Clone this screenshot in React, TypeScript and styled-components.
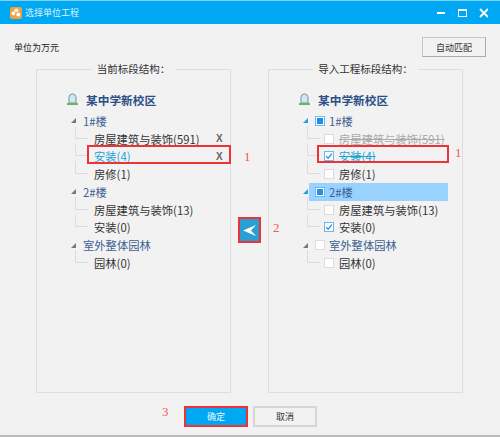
import styled, { createGlobalStyle } from "styled-components";

const GlobalStyle = createGlobalStyle`
  html, body {
    margin: 0;
    padding: 0;
    background: #f2f2f2;
  }
  * {
    box-sizing: border-box;
  }
`;

type Leaf = {
  label: string;
  checked?: boolean;
  active?: boolean;
  removed?: boolean;
  removable?: boolean;
};

type Group = {
  label: string;
  state?: "partial" | "empty";
  selected?: boolean;
  open?: boolean;
  leaves: Leaf[];
};

const leftTree: Group[] = [
  {
    label: "1#楼",
    leaves: [
      { label: "房屋建筑与装饰(591)", removable: true },
      { label: "安装(4)", removable: true, active: true },
      { label: "房修(1)" },
    ],
  },
  {
    label: "2#楼",
    leaves: [{ label: "房屋建筑与装饰(13)" }, { label: "安装(0)" }],
  },
  { label: "室外整体园林", leaves: [{ label: "园林(0)" }] },
];

const rightTree: Group[] = [
  {
    label: "1#楼",
    state: "partial",
    open: true,
    leaves: [
      { label: "房屋建筑与装饰(591)", removed: true },
      { label: "安装(4)", checked: true, active: true, removed: true },
      { label: "房修(1)" },
    ],
  },
  {
    label: "2#楼",
    state: "partial",
    selected: true,
    open: true,
    leaves: [{ label: "房屋建筑与装饰(13)" }, { label: "安装(0)", checked: true }],
  },
  { label: "室外整体园林", state: "empty", leaves: [{ label: "园林(0)" }] },
];

const SchoolIcon = () => (
  <svg width="13" height="13" viewBox="0 0 13 13">
    <path d="M3 10V4.5C3 2.5 4.5 1 6.5 1S10 2.5 10 4.5V10Z" fill="#d3e7f3" stroke="#6d94ab" />
    <rect x="1" y="10" width="11" height="2" fill="#6fb35c" />
  </svg>
);

const AppLogo = () => (
  <svg width="12" height="12" viewBox="0 0 16 16">
    <rect width="16" height="16" rx="3" fill="#f5a03c" />
    <circle cx="8.5" cy="4.5" r="2.6" fill="#fff" />
    <circle cx="4.5" cy="8.5" r="2.6" fill="#fff" />
    <circle cx="11" cy="10" r="2.6" fill="#fff" />
    <circle cx="8" cy="8" r="1.4" fill="#f5a03c" />
  </svg>
);

const Tree = ({ groups, checkable, root }: { groups: Group[]; checkable?: boolean; root: string }) => (
  <TreeBody $checkable={checkable}>
    <RootRow>
      <SchoolIcon />
      <RootLabel>{root}</RootLabel>
    </RootRow>
    {groups.map((group) => (
      <div key={group.label}>
        <GroupRow>
          <Arrow $open={group.open} />
          <GroupBody $selected={group.selected}>
            {checkable && (
              <Check $selected={group.state === "partial"}>{group.state === "partial" && <Dot />}</Check>
            )}
            <GroupLabel>{group.label}</GroupLabel>
          </GroupBody>
        </GroupRow>
        <div>
          {group.leaves.map((leaf) => (
            <LeafRow key={leaf.label}>
              {checkable && (
                <LeafCheck $selected={leaf.checked}>
                  {leaf.checked && (
                    <svg width="8" height="8" viewBox="0 0 9 9">
                      <path d="M1.2 4.6 3.5 7 7.8 1.8" fill="none" stroke="#2f8fe0" strokeWidth="1.5" />
                    </svg>
                  )}
                </LeafCheck>
              )}
              <LeafLabel $active={leaf.active} $removed={leaf.removed}>
                {leaf.label}
              </LeafLabel>
              {leaf.removable && <RemoveMark>X</RemoveMark>}
            </LeafRow>
          ))}
        </div>
      </div>
    ))}
  </TreeBody>
);

export default function App() {
  return (
    <Window>
      <GlobalStyle />
      <TitleBar>
        <AppLogo />
        <Title>选择单位工程</Title>
        <WindowControls>
          <svg width="51" height="12" viewBox="0 0 51 12">
            <rect x="0" y="5" width="8" height="2" fill="#fff" />
            <rect x="21.5" y="2.5" width="8" height="7" fill="none" stroke="#fff" />
            <rect x="21" y="2" width="9" height="2" fill="#fff" />
            <path d="M43 2 51 10M51 2 43 10" stroke="#fff" strokeWidth="1.8" />
          </svg>
        </WindowControls>
      </TitleBar>
      <Content>
        <TopRow>
          <Unit>单位为万元</Unit>
          <MatchButton>自动匹配</MatchButton>
        </TopRow>
        <Panels>
          <Panel>
            <PanelTitle>当前标段结构：</PanelTitle>
            <Tree groups={leftTree} root="某中学新校区" />
          </Panel>
          <Middle>
            <MoveButton>
              <svg width="13" height="11" viewBox="0 0 13 11">
                <path d="M0 5.5 13 0 8 5.5 13 11Z" fill="#fff" />
              </svg>
            </MoveButton>
          </Middle>
          <Panel>
            <PanelTitle>导入工程标段结构：</PanelTitle>
            <Tree groups={rightTree} root="某中学新校区" checkable />
          </Panel>
        </Panels>
        <Footer>
          <OkButton>确定</OkButton>
          <CancelButton>取消</CancelButton>
        </Footer>
      </Content>
      <Marker $x={87} $y={145} $w={144} $h={19} />
      <Marker $x={317} $y={145} $w={132} $h={18} />
      <Step $x={244} $y={149}>1</Step>
      <Step $x={455} $y={145}>1</Step>
      <Step $x={273} $y={220}>2</Step>
      <Step $x={162} $y={404}>3</Step>
    </Window>
  );
}

const Window = styled.div`
  position: relative;
  width: 500px;
  height: 437px;
  background: #f2f2f2;
  border-bottom: 2px solid #b9b9b9;
  font-family: "Noto Sans CJK SC", "Liberation Sans", sans-serif;
  font-size: 11.3px;
  color: #333;
  overflow: hidden;
`;

const TitleBar = styled.div`
  display: flex;
  align-items: center;
  height: 24px;
  padding: 0 12px 0 10px;
  background: #00a8f3;
  border-top: 1px solid #7fd0f5;
  color: #dff4fe;
`;

const Title = styled.span`
  margin-left: 3px;
  font-size: 9px;
`;

const WindowControls = styled.div`
  display: flex;
  margin-left: auto;
`;

const Content = styled.div`
  padding: 13px 14px 0 14px;
`;

const TopRow = styled.div`
  display: flex;
  align-items: center;
  justify-content: space-between;
  height: 20px;
`;

const Unit = styled.span`
  font-size: 9px;
  color: #222;
`;

const MatchButton = styled.div`
  display: flex;
  align-items: center;
  justify-content: center;
  width: 64px;
  height: 20px;
  border: 1px solid #c6c6c6;
  border-right-color: #aaa;
  border-bottom-color: #aaa;
  font-size: 9px;
`;

const Panels = styled.div`
  display: flex;
  height: 336px;
  margin: 5px 23px 0 22px;
`;

const Panel = styled.fieldset`
  flex: 0 0 195px;
  min-width: 0;
  height: 331px;
  margin: 0;
  padding: 0;
  border: 1px solid #dedede;
`;

const PanelTitle = styled.legend`
  padding: 0 5px;
  margin: 0 auto;
  font-size: 10.5px;
  line-height: 14px;
  color: #333;
`;

const Middle = styled.div`
  flex: 1;
  display: flex;
  justify-content: center;
  align-items: center;
`;

const MoveButton = styled.div`
  display: flex;
  align-items: center;
  justify-content: center;
  width: 23px;
  height: 26px;
  border: 2px solid #ee3338;
  background: #2a9fd2;
`;

const Footer = styled.div`
  display: flex;
  justify-content: center;
  gap: 5px;
  margin-top: 8px;
  padding-left: 1px;
`;

const OkButton = styled.div`
  display: flex;
  align-items: center;
  justify-content: center;
  width: 64px;
  height: 21px;
  border: 2px solid #ee3338;
  background: #00a8f3;
  color: #e8f7ff;
  font-size: 9px;
`;

const CancelButton = styled.div`
  display: flex;
  align-items: center;
  justify-content: center;
  width: 64px;
  height: 21px;
  border: 2px solid #d6d6d6;
  font-size: 9px;
`;

const TreeBody = styled.div<{ $checkable?: boolean }>`
  display: flex;
  flex-direction: column;
  padding: ${(p) => (p.$checkable ? "14px 14px 0 29px" : "14px 0 0 29px")};
  --leaf-indent: ${(p) => (p.$checkable ? "17px" : "19px")};
`;

const RootRow = styled.div`
  display: flex;
  align-items: center;
  gap: 7px;
  height: 18px;
  margin-bottom: 4px;
`;

const RootLabel = styled.span`
  font-weight: 700;
  font-size: 11.7px;
  color: #2b4f86;
`;

const GroupRow = styled.div`
  display: flex;
  align-items: center;
  height: 17.75px;
  margin-left: 5px;
`;

const GroupBody = styled.div<{ $selected?: boolean }>`
  flex: 1;
  display: flex;
  align-items: center;
  height: 100%;
  margin-left: 1px;
  padding-left: 6px;
  background: ${(p) => (p.$selected ? "#99d1ff" : "transparent")};
`;

const Arrow = styled.span<{ $open?: boolean }>`
  width: 0;
  height: 0;
  border-style: solid;
  border-width: 0 0 5px 5px;
  border-color: transparent transparent ${(p) => (p.$open ? "#1e9fe0" : "#777")} transparent;
`;

const GroupLabel = styled.span`
  color: #3c5f92;
`;

const LeafRow = styled.div`
  position: relative;
  display: flex;
  align-items: center;
  height: 17.75px;
  margin-left: 9px;
  padding-left: var(--leaf-indent);
  &::before {
    content: "";
    position: absolute;
    left: 0;
    top: -4px;
    bottom: 50%;
    width: 12px;
    border-left: 1px solid #dcdcdc;
    border-bottom: 1px solid #dcdcdc;
  }
`;

const LeafLabel = styled.span<{ $active?: boolean; $removed?: boolean }>`
  color: ${(p) => (p.$active ? "#18a3d6" : p.$removed ? "#aaa" : "#333")};
  text-decoration: ${(p) => (p.$removed ? "line-through" : "none")};
  white-space: nowrap;
`;

const RemoveMark = styled.span`
  position: absolute;
  left: 141px;
  font-family: "Liberation Sans", sans-serif;
  font-weight: 700;
  font-size: 10px;
  color: #666;
`;

const Check = styled.span<{ $selected?: boolean }>`
  display: flex;
  align-items: center;
  justify-content: center;
  flex: none;
  width: 10px;
  height: 10px;
  margin-right: 4px;
  background: #fff;
  border: 1px solid ${(p) => (p.$selected ? "#6fb8ee" : "#dcdcdc")};
`;

const LeafCheck = styled(Check)`
  margin-right: 5px;
  position: relative;
  z-index: 1;
`;

const Dot = styled.span`
  width: 6px;
  height: 6px;
  background: #1e8fe8;
`;

const Marker = styled.div<{ $x: number; $y: number; $w: number; $h: number }>`
  position: absolute;
  left: ${(p) => p.$x}px;
  top: ${(p) => p.$y}px;
  width: ${(p) => p.$w}px;
  height: ${(p) => p.$h}px;
  border: 2px solid #ee3338;
`;

const Step = styled.span<{ $x: number; $y: number }>`
  position: absolute;
  left: ${(p) => p.$x}px;
  top: ${(p) => p.$y}px;
  font-family: "Liberation Serif", serif;
  font-size: 13px;
  line-height: 16px;
  color: #f0585b;
`;
